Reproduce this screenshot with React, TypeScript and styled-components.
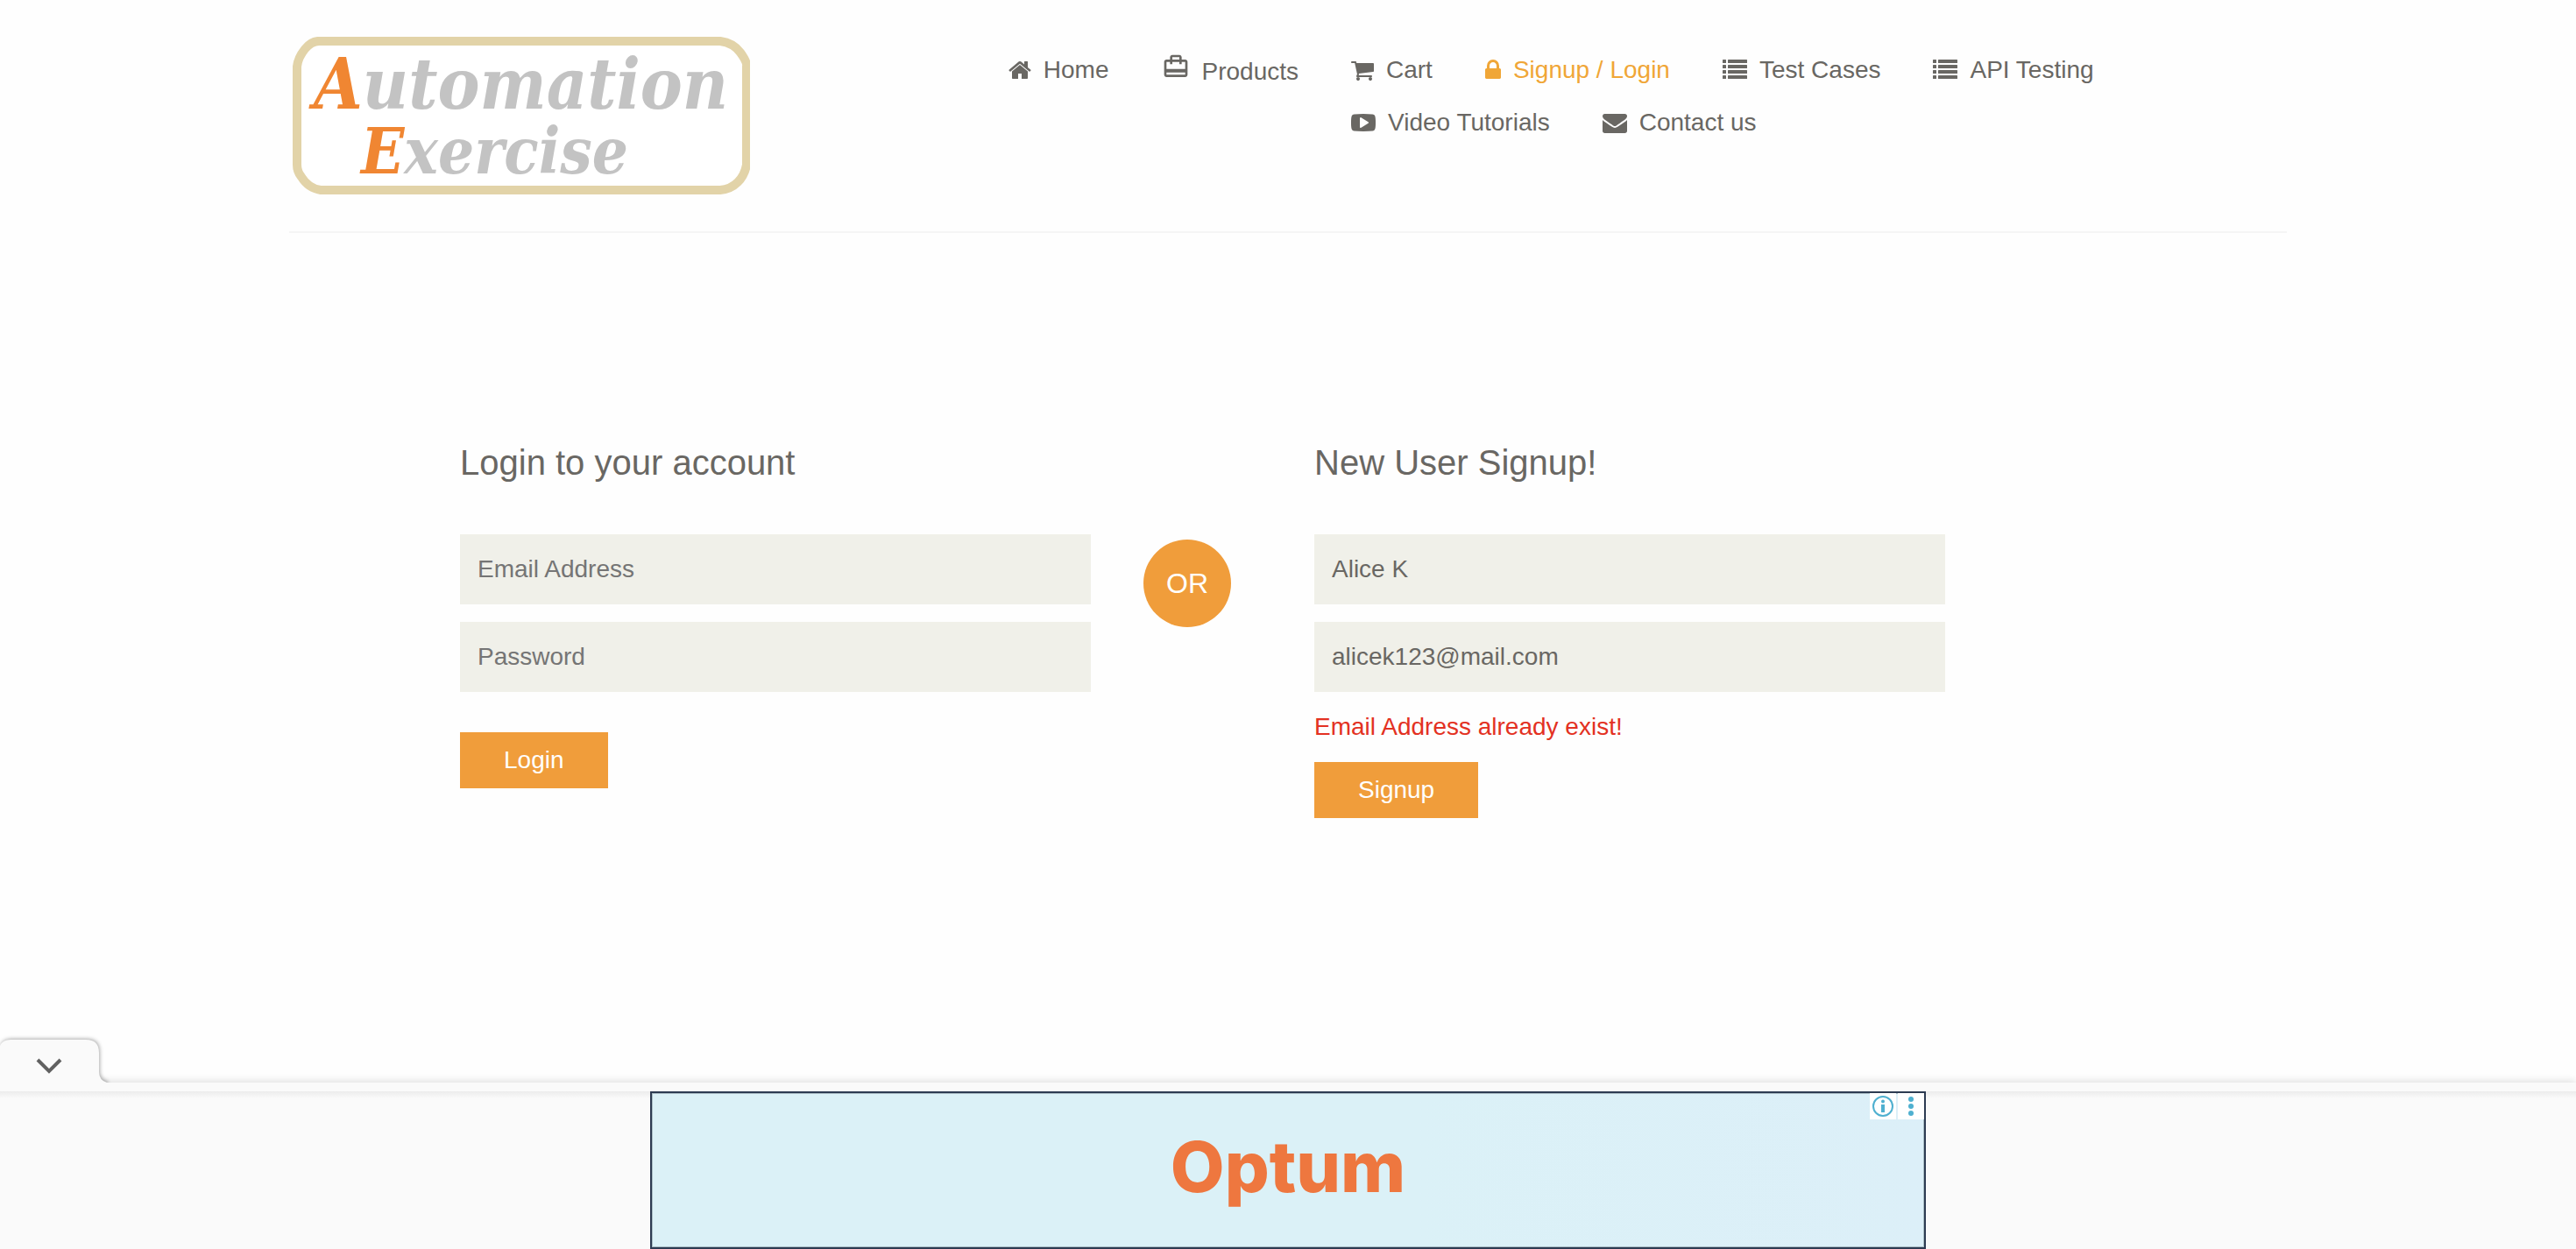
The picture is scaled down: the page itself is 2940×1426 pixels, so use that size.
import React from "react";
import styled, { createGlobalStyle, css } from "styled-components";

const GlobalStyle = createGlobalStyle`
  *, *::before, *::after { box-sizing: border-box; }
  body {
    margin: 0;
    background: #fefefe;
    color: #696763;
    font-family: "Liberation Sans", Arial, Helvetica, sans-serif;
    font-size: 28px;
    line-height: 40px;
    font-weight: 300;
  }
`;

const Container = styled.div`
  max-width: 2340px;
  margin: 0 auto;
  padding: 0 30px;
`;

const HeaderBar = styled.header`
  display: flex;
  align-items: flex-start;
  padding: 42px 0;
  border-bottom: 2px solid #f5f5f5;
`;

const LogoLink = styled.a`
  flex: 0 0 36%;
  padding-left: 4px;
  svg { display: block; }
`;

const Nav = styled.nav`
  flex: 1;
  display: flex;
  align-items: flex-start;
  gap: 60px;
  padding-top: 18px;
`;

const NavGroup = styled.div`
  flex: 1;
  display: flex;
  flex-wrap: wrap;
  gap: 20px 60px;
`;

const NavLink = styled.a<{ $active?: boolean; $tall?: boolean }>`
  display: flex;
  align-items: center;
  gap: 14px;
  color: ${(p) => (p.$active ? "#f0a637" : "#696763")};
  text-decoration: none;
  white-space: nowrap;
  svg { display: block; fill: currentColor; }
  ${(p) =>
    p.$tall &&
    css`
      align-items: flex-start;
      line-height: 44px;
    `}
`;

const Forms = styled.main`
  display: grid;
  grid-template-columns: repeat(12, 1fr);
  max-width: 2340px;
  margin: 240px auto 0;
`;

const FormColumn = styled.section<{ $start: number }>`
  grid-column: ${(p) => p.$start} / span 4;
  padding: 0 30px;
`;

const Divider = styled.div`
  grid-column: 6 / span 1;
  padding: 110px 30px 0;
`;

const OrBadge = styled.div`
  width: 100px;
  height: 100px;
  border-radius: 50%;
  background: #f09d3b;
  color: #fff;
  font-size: 32px;
  line-height: 100px;
  text-align: center;
`;

const Title = styled.h2`
  margin: 0 0 60px;
  font-size: 40px;
  line-height: 44px;
  font-weight: 300;
`;

const Form = styled.form`
  display: flex;
  flex-direction: column;
  align-items: flex-start;
  gap: 20px;
`;

const Field = styled.input`
  width: 100%;
  height: 80px;
  padding: 0 20px;
  border: 0;
  border-radius: 0;
  outline: 0;
  background: #f0f0e9;
  color: #696763;
  font: inherit;
  &::placeholder { color: #757575; opacity: 1; }
`;

const ErrorText = styled.p`
  margin: 0;
  color: #e33122;
`;

const Button = styled.button<{ $spaced?: boolean }>`
  height: 64px;
  margin-top: ${(p) => (p.$spaced ? 26 : 0)}px;
  padding: 0 50px;
  border: 0;
  background: #f09d3b;
  color: #fff;
  font: inherit;
`;

const Anchor = styled.aside`
  position: fixed;
  left: 0;
  right: 0;
  bottom: 0;
`;

const CollapseTab = styled.button`
  display: block;
  width: 124px;
  height: 50px;
  padding: 0;
  border: 0;
  background: none;
  position: relative;
  z-index: 1;
  svg {
    display: block;
    clip-path: inset(-6px -6px 0 -6px);
  }
`;

const TabShape = styled.path`
  fill: #fafafa;
  filter: drop-shadow(1px -1px 2px rgba(0, 0, 0, 0.32));
`;

const AnchorEdge = styled.div`
  height: 10px;
  background: #fafafa;
  box-shadow: 0 -2px 8px rgba(0, 0, 0, 0.12);
`;

const AnchorBody = styled.div`
  display: flex;
  justify-content: center;
  background: linear-gradient(#ececec, #fafafa 8px);
`;

const AdFrame = styled.div`
  display: grid;
  grid-template-columns: 1fr auto 1fr;
  width: 1456px;
  height: 180px;
  border: 2px solid #2d3b52;
  background: linear-gradient(90deg, #dbf1f7 60%, #dceff8);
  box-shadow: inset 0 0 0 1px #a9bcc4;
`;

const Brand = styled.a`
  grid-column: 2;
  align-self: center;
  margin-bottom: 8px;
  color: #ee773f;
  font-family: Inter, sans-serif;
  font-size: 80px;
  line-height: 100px;
  font-weight: 800;
  text-decoration: none;
`;

const AdControls = styled.div`
  display: flex;
  justify-content: flex-end;
  align-items: flex-start;
  gap: 2px;
`;

const AdControl = styled.button`
  width: 30px;
  height: 30px;
  padding: 0;
  border: 0;
  background: #fff;
  svg { display: block; }
`;

const Glyph = ({ box, width, children }: { box: string; width: number; children: React.ReactNode }) => (
  <svg viewBox={box} width={width} height={28} aria-hidden="true">
    {children}
  </svg>
);

const HomeIcon = () => (
  <Glyph box="64 0 1664 1792" width={26}>
    <path d="M1472 992v480q0 26-19 45t-45 19h-384v-384h-256v384h-384q-26 0-45-19t-19-45v-480q0-1 .5-3t.5-3l575-474 575 474q1 2 1 6zm223-69l-62 74q-8 9-21 11h-3q-13 0-21-7l-692-577-692 577q-12 8-24 7-13-2-21-11l-62-74q-8-10-7-23.5t11-21.5l719-599q32-26 76-26t76 26l244 204v-195q0-14 9-23t23-9h192q14 0 23 9t9 23v408l219 182q10 8 11 21.5t-7 23.5z" />
  </Glyph>
);

const BagIcon = () => (
  <svg viewBox="0 0 24 24" width={32} height={32} aria-hidden="true">
    <path d="M20 6h-3V4c0-1.11-.89-2-2-2H9c-1.11 0-2 .89-2 2v2H4c-1.11 0-2 .89-2 2v11c0 1.11.89 2 2 2h16c1.11 0 2-.89 2-2V8c0-1.11-.89-2-2-2zM9 4h6v2H9V4zm11 15H4v-2h16v2zm0-5H4V8h3v2h2V8h6v2h2V8h3v6z" />
  </svg>
);

const CartIcon = () => (
  <Glyph box="64 0 1664 1792" width={26}>
    <path d="M704 1536q0 52-38 90t-90 38-90-38-38-90 38-90 90-38 90 38 38 90zm896 0q0 52-38 90t-90 38-90-38-38-90 38-90 90-38 90 38 38 90zm128-1088v512q0 24-16.5 42.5t-40.5 21.5l-1044 122q13 60 13 70 0 16-24 64h920q26 0 45 19t19 45-19 45-45 19h-1024q-26 0-45-19t-19-45q0-11 8-31.5t16-36 21.5-40 15.5-29.5l-177-823h-204q-26 0-45-19t-19-45 19-45 45-19h256q16 0 28.5 6.5t19.5 15.5 13 24.5 8 26 5.5 29.5 4.5 26h1201q26 0 45 19t19 45z" />
  </Glyph>
);

const LockIcon = () => (
  <Glyph box="320 0 1152 1792" width={18}>
    <path d="M640 768h512v-192q0-106-75-181t-181-75-181 75-75 181v192zm832 96v576q0 40-28 68t-68 28h-960q-40 0-68-28t-28-68v-576q0-40 28-68t68-28h32v-192q0-184 132-316t316-132 316 132 132 316v192h32q40 0 68 28t28 68z" />
  </Glyph>
);

const ListIcon = () => (
  <Glyph box="0 0 1792 1792" width={28}>
    {[128, 512, 896, 1280].map((y) => (
      <g key={y}>
        <rect x="0" y={y} width="256" height="256" rx="32" />
        <rect x="384" y={y} width="1408" height="256" rx="32" />
      </g>
    ))}
  </Glyph>
);

const VideoIcon = () => (
  <Glyph box="0 0 1792 1792" width={28}>
    <path d="M1280 896q0-37-30-54l-512-320q-31-20-65-2-33 18-33 56v640q0 38 33 56 16 8 31 8 20 0 34-10l512-320q30-17 30-54zm512 0q0 96-1 150t-8.5 136.5-22.5 147.5q-16 73-69 123t-124 58q-222 25-671 25t-671-25q-71-8-124.5-58t-69.5-123q-14-65-21.5-147.5t-8.5-136.5-1-150 1-150 8.5-136.5 22.5-147.5q16-73 69-123t124-58q222-25 671-25t671 25q71 8 124.5 58t69.5 123q14 65 21.5 147.5t8.5 136.5 1 150z" />
  </Glyph>
);

const MailIcon = () => (
  <Glyph box="0 0 1792 1792" width={28}>
    <path d="M1792 710v794q0 66-47 113t-113 47h-1472q-66 0-113-47t-47-113v-794q44 49 101 87 362 246 497 345 57 42 92.5 65.5t94.5 48 110 24.5h2q51 0 110-24.5t94.5-48 92.5-65.5q170-123 498-345 57-39 100-87zm0-294q0 79-49 151t-122 123q-376 261-468 325-10 7-42.5 31t-54 38.5-52 32.5-57.5 27-50 9h-2q-23 0-50-9t-57.5-27-52-32.5-54-38.5-42.5-31q-91-64-262-182.5t-205-142.5q-62-42-117-115.5t-55-136.5q0-78 41.5-130t118.5-52h1472q65 0 112.5 47t47.5 113z" />
  </Glyph>
);

const LogoText = styled.text`
  font-family: "DejaVu Serif Condensed", "DejaVu Serif", serif;
  font-style: italic;
  font-weight: 700;
  fill: #c3c3c3;
`;

const Logo = () => (
  <svg viewBox="0 0 522 180" width={522} height={180} role="img" aria-label="Automation Exercise">
    <path
      d="M32 5H488Q503 7 511 18T518 34V146Q516 158 508 166T488 175H32Q18 173 10 160Q5 154 5 146V34Q6 24 14 14T32 5Z"
      fill="#fff"
      stroke="#e2d3a8"
      strokeWidth="10"
    />
    <LogoText x="24" y="82" fontSize="80">
      <tspan fill="#f08632">A</tspan>utomation
    </LogoText>
    <LogoText x="78" y="156" fontSize="72">
      <tspan fill="#f08632">E</tspan>xercise
    </LogoText>
  </svg>
);

export default function App() {
  return (
    <>
      <GlobalStyle />
      <Container>
        <HeaderBar>
          <LogoLink href="#">
            <Logo />
          </LogoLink>
          <Nav>
            <NavLink href="#"><HomeIcon />Home</NavLink>
            <NavLink href="#" $tall><BagIcon />Products</NavLink>
            <NavGroup>
              <NavLink href="#"><CartIcon />Cart</NavLink>
              <NavLink href="#" $active><LockIcon />Signup / Login</NavLink>
              <NavLink href="#"><ListIcon />Test Cases</NavLink>
              <NavLink href="#"><ListIcon />API Testing</NavLink>
              <NavLink href="#"><VideoIcon />Video Tutorials</NavLink>
              <NavLink href="#"><MailIcon />Contact us</NavLink>
            </NavGroup>
          </Nav>
        </HeaderBar>
      </Container>

      <Forms>
        <FormColumn $start={2}>
          <Title>Login to your account</Title>
          <Form>
            <Field type="email" placeholder="Email Address" aria-label="Email Address" />
            <Field type="password" placeholder="Password" aria-label="Password" />
            <Button type="button" $spaced>Login</Button>
          </Form>
        </FormColumn>
        <Divider>
          <OrBadge>OR</OrBadge>
        </Divider>
        <FormColumn $start={7}>
          <Title>New User Signup!</Title>
          <Form>
            <Field type="text" defaultValue="Alice K" aria-label="Name" />
            <Field type="email" defaultValue="alicek123@mail.com" aria-label="Email Address" />
            <ErrorText>Email Address already exist!</ErrorText>
            <Button type="button">Signup</Button>
          </Form>
        </FormColumn>
      </Forms>

      <Anchor>
        <CollapseTab aria-label="Collapse">
          <svg width="124" height="50" viewBox="0 0 124 50" overflow="visible">
            <TabShape d="M0 8Q3 1 12 1H98Q113 1 113 16V38Q113 47 122 50V60H0Z" />
            <path d="M43 24L56 37L69 24" fill="none" stroke="#616161" strokeWidth="4" />
          </svg>
        </CollapseTab>
        <AnchorEdge />
        <AnchorBody>
          <AdFrame>
            <Brand href="#">Optum</Brand>
            <AdControls>
              <AdControl aria-label="Ad information">
                <svg width="30" height="30" viewBox="0 0 30 30">
                  <circle cx="15" cy="15" r="11" fill="none" stroke="#4fb0d0" strokeWidth="2" />
                  <circle cx="15" cy="9.5" r="2" fill="#4fb0d0" />
                  <path d="M13 13h4v9h-4z" fill="#4fb0d0" />
                </svg>
              </AdControl>
              <AdControl aria-label="Ad options">
                <svg width="30" height="30" viewBox="0 0 30 30" fill="#4fb0d0">
                  <circle cx="15" cy="7" r="3" />
                  <circle cx="15" cy="15" r="3" />
                  <circle cx="15" cy="23" r="3" />
                </svg>
              </AdControl>
            </AdControls>
          </AdFrame>
        </AnchorBody>
      </Anchor>
    </>
  );
}
